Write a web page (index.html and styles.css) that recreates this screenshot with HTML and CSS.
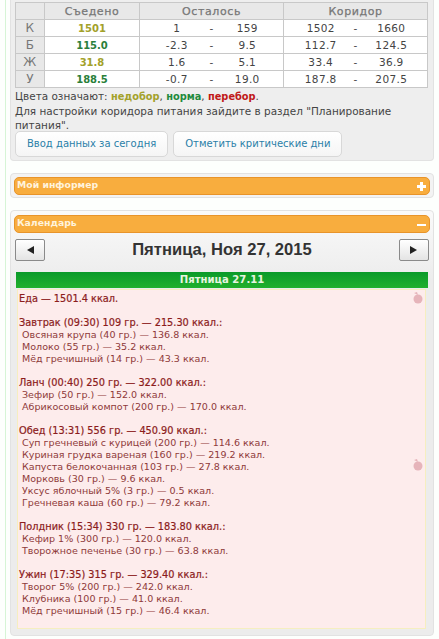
FILE: index.html
```html
<!DOCTYPE html>
<html lang="ru">
<head>
<meta charset="utf-8">
<title>Дневник питания</title>
<link rel="stylesheet" href="styles.css">
</head>
<body>
<div class="page">
  <section class="panel summary">
    <table class="stats">
      <colgroup>
        <col class="c-label"><col class="c-eaten">
        <col class="c-a"><col class="c-dash"><col class="c-a">
        <col class="c-a"><col class="c-dash"><col class="c-a">
      </colgroup>
      <tr class="head"><th></th><th>Съедено</th><th colspan="3">Осталось</th><th colspan="3">Коридор</th></tr>
      <tr><th>К</th><td class="eaten under">1501</td><td class="l">1</td><td class="m">-</td><td class="r">159</td><td class="l">1502</td><td class="m">-</td><td class="r">1660</td></tr>
      <tr><th>Б</th><td class="eaten norm">115.0</td><td class="l">-2.3</td><td class="m">-</td><td class="r">9.5</td><td class="l">112.7</td><td class="m">-</td><td class="r">124.5</td></tr>
      <tr><th>Ж</th><td class="eaten under">31.8</td><td class="l">1.6</td><td class="m">-</td><td class="r">5.1</td><td class="l">33.4</td><td class="m">-</td><td class="r">36.9</td></tr>
      <tr><th>У</th><td class="eaten norm">188.5</td><td class="l">-0.7</td><td class="m">-</td><td class="r">19.0</td><td class="l">187.8</td><td class="m">-</td><td class="r">207.5</td></tr>
    </table>
    <p class="note">Цвета означают: <b class="under">недобор</b>, <b class="norm">норма</b>, <b class="over">перебор</b>.<br>Для настройки коридора питания зайдите в раздел "Планирование питания".</p>
    <div class="actions">
      <a class="btn">Ввод данных за сегодня</a>
      <a class="btn">Отметить критические дни</a>
    </div>
  </section>

  <section class="panel collapsed">
    <div class="bar"><span>Мой информер</span><span class="sign plus"></span></div>
  </section>

  <section class="panel calendar">
    <div class="bar"><span>Календарь</span><span class="sign minus"></span></div>
    <div class="nav">
      <button class="arrow"><svg width="7" height="8" viewBox="0 0 7 8"><path d="M7 0V8L0 4Z"/></svg></button>
      <h1>Пятница, Ноя 27, 2015</h1>
      <button class="arrow"><svg width="7" height="8" viewBox="0 0 7 8"><path d="M0 0V8L7 4Z"/></svg></button>
    </div>
    <div class="day">
      <div class="day-title">Пятница 27.11</div>
      <div class="log">
        <svg class="apple a1" width="10" height="12" viewBox="0 0 10 12"><path d="M1 1 5 3 4 0Z"/><circle cx="5" cy="7" r="4.5"/></svg>
        <svg class="apple a2" width="10" height="12" viewBox="0 0 10 12"><path d="M1 1 5 3 4 0Z"/><circle cx="5" cy="7" r="4.5"/></svg>
        <div class="meal"><h3>Еда — 1501.4 ккал.</h3></div>
        <div class="meal"><h3>Завтрак (09:30) 109 гр. — 215.30 ккал.:</h3>
          <p>Овсяная крупа (40 гр.) — 136.8 ккал.</p><p>Молоко (55 гр.) — 35.2 ккал.</p><p>Мёд гречишный (14 гр.) — 43.3 ккал.</p></div>
        <div class="meal"><h3>Ланч (00:40) 250 гр. — 322.00 ккал.:</h3>
          <p>Зефир (50 гр.) — 152.0 ккал.</p><p>Абрикосовый компот (200 гр.) — 170.0 ккал.</p></div>
        <div class="meal"><h3>Обед (13:31) 556 гр. — 450.90 ккал.:</h3>
          <p>Суп гречневый с курицей (200 гр.) — 114.6 ккал.</p><p>Куриная грудка вареная (160 гр.) — 219.2 ккал.</p><p>Капуста белокочанная (103 гр.) — 27.8 ккал.</p><p>Морковь (30 гр.) — 9.6 ккал.</p><p>Уксус яблочный 5% (3 гр.) — 0.5 ккал.</p><p>Гречневая каша (60 гр.) — 79.2 ккал.</p></div>
        <div class="meal"><h3>Полдник (15:34) 330 гр. — 183.80 ккал.:</h3>
          <p>Кефир 1% (300 гр.) — 120.0 ккал.</p><p>Творожное печенье (30 гр.) — 63.8 ккал.</p></div>
        <div class="meal"><h3>Ужин (17:35) 315 гр. — 329.40 ккал.:</h3>
          <p>Творог 5% (200 гр.) — 242.0 ккал.</p><p>Клубника (100 гр.) — 41.0 ккал.</p><p>Мёд гречишный (15 гр.) — 46.4 ккал.</p></div>
      </div>
    </div>
  </section>
</div>
</body>
</html>
```
FILE: styles.css
```css
* { box-sizing: border-box; }
html, body { margin: 0; height: 100%; }
body {
  width: 439px; height: 639px; overflow: hidden;
  background: #fdfffd;
  font-family: "DejaVu Sans", Verdana, sans-serif;
  font-size: 10px; color: #333;
}
.page {
  margin-left: 5px; width: 434px; height: 639px;
  border-left: 1px solid #d6f5d6;
  padding: 0 5px 0 4px;
  display: flex; flex-direction: column; gap: 12px;
}
.panel {
  background: #efefef; border: 1px solid #e2e2e2; border-radius: 4px;
}
.summary {
  height: 162px; margin-top: -1px; padding: 3px 4px 0 4px;
  border-top: 0; border-radius: 0 0 4px 4px;
  background: #eeeeee;
}
.stats {
  border-collapse: collapse; table-layout: fixed; width: 413px;
  font-size: 10.5px; letter-spacing: .35px; background: #fff; color: #444;
}
.stats th, .stats td { height: 17px; padding: 0; border: 1px solid #c8c8c8; text-align: center; font-weight: normal; }
.stats th { background: #e8e8e8; color: #777; font-size: 12px; }
.stats .head th { font-size: 11px; color: #777; letter-spacing: .6px; -webkit-text-stroke: .25px #777; }
.stats td.l { border-right: 0; padding-left: 20px; }
.stats td.m { border-left: 0; border-right: 0; }
.stats td.r { border-left: 0; padding-right: 18px; }
.c-label { width: 29px; }
.c-eaten { width: 95px; }
.c-a { width: 54px; }
.c-dash { width: 36px; }
.stats td.eaten { font-weight: bold; font-size: 10px; letter-spacing: 0; }
.under { color: #a3a12a; }
.norm { color: #1f8a3c; }
.over { color: #c01818; }
.stats td.under { color: #a3a12a; }
.stats td.norm { color: #2a7f3a; }
.note {
  margin: 1px 0 0; font-size: 10.45px; line-height: 14px; color: #444;
}
.note b { font-size: 9.8px; }
.actions { display: flex; gap: 5px; margin-top: -1px; }
.btn {
  display: block; height: 26px; padding: 0 11px; line-height: 24px;
  font-size: 10px; color: #2a7fa8; background: linear-gradient(#fff, #f5f5f5);
  border: 1px solid #d8d8d8; border-radius: 5px;
}
.collapsed { height: 25px; padding: 3px 3px 0 3px; background: #f3f3f3; }
.calendar { height: 426px; padding: 4px 3px 0 3px; background: linear-gradient(#fafafa, #ececec 70px, #ececec); }
.bar {
  height: 18px; padding: 0 2px; display: flex; justify-content: space-between; align-items: center;
  background: #f8ad3e; border: 1px solid #e8942a; border-radius: 5px;
  color: #fff3dc; font-weight: bold; font-size: 9.3px;
}
.bar span:first-child { position: relative; top: -2px; }
.sign { position: relative; display: block; width: 9px; height: 9px; margin-right: 1px; }
.sign::before { content: ""; position: absolute; left: 0; right: 0; top: 4px; height: 2px; background: #fff; }
.plus::after { content: ""; position: absolute; top: 0; bottom: 0; left: 3px; width: 3px; background: #fff; }
.plus::before { top: 3px; height: 3px; }
.nav { display: flex; justify-content: space-between; align-items: center; padding: 6px 1px 0; }
.nav h1 { margin: 0; font: bold 16.6px "Liberation Sans", Arial, sans-serif; color: #333; }
.arrow {
  width: 30px; height: 22px; padding: 0; display: flex; align-items: center; justify-content: center;
  background: linear-gradient(#fff, #e4e4e4); border: 1px solid #8a8a8a; border-radius: 2px;
}
.arrow svg { fill: #222; }
.day { margin: 11px 2px 0 2px; }
.day-title {
  height: 16px; line-height: 16px; text-align: center; font-weight: bold; font-size: 10.1px;
  color: #e8f5e0; background: linear-gradient(#0a9a2a, #22b02c);
}
.log {
  position: relative; margin: 1px 2px 0 1px; height: 340px; padding: 3px 1px;
  background: #fdecec; border: 1px solid #f6eec0; color: #8c1c1c; line-height: 12px;
}
.meal { margin-bottom: 12px; }
.meal h3 { margin: 0; font-size: 9.75px; font-weight: normal; color: #8c1c1c; -webkit-text-stroke: .2px #8c1c1c; }
.meal p { margin: 0 0 0 3px; font-size: 9.55px; color: #8f3a3a; }
.apple { position: absolute; right: 2px; fill: #e6b4ba; }
.a1 { top: 2px; }
.a2 { top: 169px; }
```
